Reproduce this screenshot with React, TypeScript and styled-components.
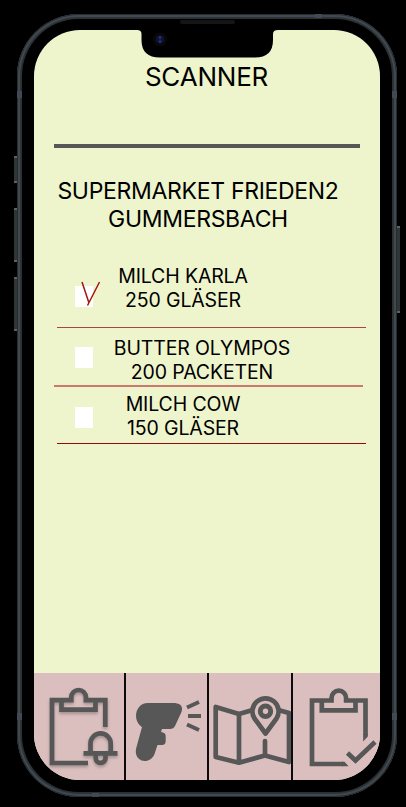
import React from "react";
import styled, { createGlobalStyle } from "styled-components";

const INK = "#565756";

const GlobalStyle = createGlobalStyle`
  * { box-sizing: border-box; }
  html, body, #root { height: 100%; }
  body { margin: 0; background: #000; overflow: hidden; font-family: Inter, "Liberation Sans", sans-serif; color: #000; }
`;

const Stage = styled.main`
  display: grid;
  grid-template-columns: 3px 380px 3px;
  height: 807px;
  width: 406px;
  padding: 14px 6px 10px 14px;
  background: #000;
`;

const KeyRail = styled.div<{ $start: number }>`
  display: flex;
  flex-direction: column;
  gap: 15px;
  padding-top: ${(p) => p.$start}px;
`;

const SideKey = styled.span<{ $length: number; $gap?: number }>`
  width: 3px;
  height: ${(p) => p.$length}px;
  margin-top: ${(p) => p.$gap ?? 0}px;
  background: #303638;
  border: solid #5c6163;
  border-width: 2px 0;
`;

const Phone = styled.div`
  position: relative;
  height: 783px;
  padding: 5px;
  border-radius: 62px;
  background: #2a3034;
  box-shadow: inset 0 0 0 1px #262c30, inset 0 0 0 3px #41494f, inset 0 0 0 4px #2d3439;
`;

const AntennaBand = styled.span<{ $x: number; $y: number; $flat?: boolean }>`
  position: absolute;
  left: ${(p) => p.$x}px;
  top: ${(p) => p.$y}px;
  width: ${(p) => (p.$flat ? 7 : 5)}px;
  height: ${(p) => (p.$flat ? 4 : 7)}px;
  background: #434854;
`;

const Bezel = styled.div`
  height: 100%;
  padding: 11px 12px 12px 12px;
  border-radius: 57px;
  background: #000;
`;

const Screen = styled.div`
  position: relative;
  display: flex;
  flex-direction: column;
  height: 750px;
  border-radius: 46px;
  overflow: hidden;
  background: #eef5cc;
`;

const Notch = styled.svg`
  position: absolute;
  left: 103px;
  top: -16px;
`;

const Speaker = styled.span`
  position: absolute;
  left: 163px;
  top: 6px;
  width: 55px;
  height: 4px;
  border-radius: 2px;
  background: #151617;
`;

const Title = styled.h1`
  margin: 31px 1px 0 0;
  text-align: center;
  font-size: 26px;
  font-weight: 400;
  letter-spacing: -0.2px;
  line-height: 32px;
`;

const TitleRule = styled.hr`
  width: 306px;
  height: 4px;
  margin: 51px 0 0 20px;
  border: 0;
  background: ${INK};
`;

const Store = styled.h2`
  width: 282px;
  margin: 30px 0 0 23px;
  text-align: center;
  white-space: nowrap;
  font-size: 23px;
  font-weight: 400;
  letter-spacing: -0.31px;
  line-height: 27.5px;
`;

const Items = styled.ul`
  list-style: none;
  margin: 31px 0 0;
  padding: 0;
`;

const Item = styled.li<{ $height: number; $rule: string; $thick?: boolean }>`
  display: flex;
  align-items: flex-start;
  height: ${(p) => p.$height}px;
  width: 309px;
  margin-left: ${(p) => (p.$thick ? 20 : 23)}px;
  padding-left: ${(p) => (p.$thick ? 21 : 18)}px;
  border-bottom: ${(p) => (p.$thick ? 2 : 1)}px solid ${(p) => p.$rule};
`;

const Box = styled.span<{ $drop: number }>`
  position: relative;
  flex: none;
  width: 18px;
  height: 21px;
  margin-top: ${(p) => p.$drop}px;
  background: #fff;
`;

const Tick = styled.svg`
  position: absolute;
  left: 5px;
  top: -6px;
`;

const Label = styled.p<{ $shift: number; $drop: number }>`
  width: 180px;
  margin: ${(p) => p.$drop}px 0 0 ${(p) => p.$shift}px;
  text-align: center;
  white-space: pre;
  font-size: 19.5px;
  font-weight: 400;
  letter-spacing: -0.13px;
  line-height: 23.5px;
`;

const NavBar = styled.nav`
  display: grid;
  grid-template-columns: 92px 83px 84px 87px;
  height: 107px;
  margin-top: auto;
  background: #dbbfbf;
`;

const NavItem = styled.button`
  display: flex;
  padding: 0;
  border: 0;
  border-right: 2px solid #0c0a0a;
  background: none;
  &:last-child { border-right: 0; }
`;

const Glyph = styled.svg<{ $shadow?: boolean }>`
  flex: none;
  fill: none;
  stroke: ${INK};
  stroke-width: 4.7;
  filter: ${(p) => (p.$shadow ? "drop-shadow(0 2px 1.5px rgba(0,0,0,.25))" : "none")};
`;

const items = [
  { text: "MILCH KARLA\n250 GLÄSER", checked: true, height: 64, rule: "#ad453c", box: 22, shift: 0, drop: 1 },
  { text: "BUTTER OLYMPOS\n200 PACKETEN", checked: false, height: 59, rule: "#cb796c", thick: true, box: 19, shift: 19, drop: 9 },
  { text: "MILCH COW\n150 GLÄSER", checked: false, height: 57, rule: "#8f0c0c", box: 20, shift: 0, drop: 6 },
];

const BellList = () => (
  <Glyph width="90" height="107" viewBox="34 673 90 107" $shadow>
    <path d="M88 763H52V700.200H71.300V697.300a7.300 7.300 0 0 1 14.600 0V700.200H105.300V727" />
    <path d="M61.500 702V709.700H95.500V702" />
    <path d="M90.500 752V743.500a10.100 10.100 0 0 1 20.200 0V752M83.500 753.300H117.500M95.700 755V758a4.900 4.900 0 0 0 9.800 0V755" />
  </Glyph>
);

const ScannerGun = () => (
  <Glyph width="81" height="107" viewBox="126 673 81 107">
    <path
      fill={INK}
      stroke="none"
      d="M148 703H175Q184 704 181.500 712L175 726Q173.500 729 170 729H162L161 732Q165.700 732.500 165.700 736V741Q165.700 745 162 745H157.500L154.500 754C150 766 132 762 136.500 747L142 727C132 721 135 703 148 703Z"
    />
    <path strokeWidth="4" d="M187 707.500L199 702M188 716H201M187 724.500L199 730" />
  </Glyph>
);

const MapPin = () => (
  <Glyph width="82" height="107" viewBox="209 673 82 107" strokeLinejoin="round">
    <path d="M251 710.500L239 714L215.700 707V757L239 762.700L265 755.500L289 762V713L280 710.500M239 714V762M265 755V741" strokeLinecap="round" />
    <path d="M265.500 733.500L254.500 718.500A13.100 13.100 0 1 1 276.500 718.500Z" />
    <circle cx="265.500" cy="711.300" r="5.200" strokeWidth="5" />
  </Glyph>
);

const CheckList = () => (
  <Glyph width="87" height="107" viewBox="293 673 87 107">
    <path d="M343 764H312V700.500H331.500V698a7.300 7.300 0 0 1 14.600 0V700.500H365.500V735" />
    <path d="M321.800 702V710.300H355.500V702" />
    <path d="M347.500 753L355.500 760.500L375 742" />
    <path fill={INK} stroke="none" d="M363.150 734H367.850V736.500L363.150 741.500ZM342 761.650H344.500L348.500 766.350H342Z" />
  </Glyph>
);

export default function App() {
  return (
    <>
      <GlobalStyle />
      <Stage>
        <KeyRail $start={142}>
          <SideKey $length={27} />
          <SideKey $length={54} $gap={10} />
          <SideKey $length={54} />
        </KeyRail>
        <Phone>
          <AntennaBand $x={0} $y={77} />
          <AntennaBand $x={375} $y={77} />
          <AntennaBand $x={0} $y={699} />
          <AntennaBand $x={375} $y={699} />
          <AntennaBand $x={298} $y={0} $flat />
          <AntennaBand $x={75} $y={779} $flat />
          <Speaker />
          <Bezel>
            <Screen>
              <Notch width="141" height="44" viewBox="137 14 141 44">
                <path d="M137 30Q141.500 30 141.500 34V40Q141.500 57.500 160 57.500H255Q273 57.500 273 40V34Q273 30 278 30V29H137Z" />
                <circle cx="160" cy="39.500" r="7" fill="#080809" />
                <circle cx="160" cy="39.500" r="4" fill="#10133a" />
                <circle cx="160" cy="37.500" r="1.300" fill="#28358b" />
                <circle cx="160" cy="41.500" r="1.300" fill="#26317b" />
              </Notch>
              <Title>SCANNER</Title>
              <TitleRule />
              <Store>
                SUPERMARKET FRIEDEN2
                <br />
                GUMMERSBACH
              </Store>
              <Items>
                {items.map((item) => (
                  <Item key={item.text} $height={item.height} $rule={item.rule} $thick={item.thick}>
                    <Box $drop={item.box}>
                      {item.checked && (
                        <Tick width="22" height="26" viewBox="0 0 22 26" fill="none" stroke="#a51414" strokeWidth="1.5">
                          <path d="M2 2L9 23M19.500 2L7.500 25.500" />
                        </Tick>
                      )}
                    </Box>
                    <Label $shift={item.shift} $drop={item.drop}>{item.text}</Label>
                  </Item>
                ))}
              </Items>
              <NavBar>
                <NavItem aria-label="Reminders"><BellList /></NavItem>
                <NavItem aria-label="Scanner"><ScannerGun /></NavItem>
                <NavItem aria-label="Map"><MapPin /></NavItem>
                <NavItem aria-label="Completed"><CheckList /></NavItem>
              </NavBar>
            </Screen>
          </Bezel>
        </Phone>
        <KeyRail $start={212}>
          <SideKey $length={87} />
        </KeyRail>
      </Stage>
    </>
  );
}
